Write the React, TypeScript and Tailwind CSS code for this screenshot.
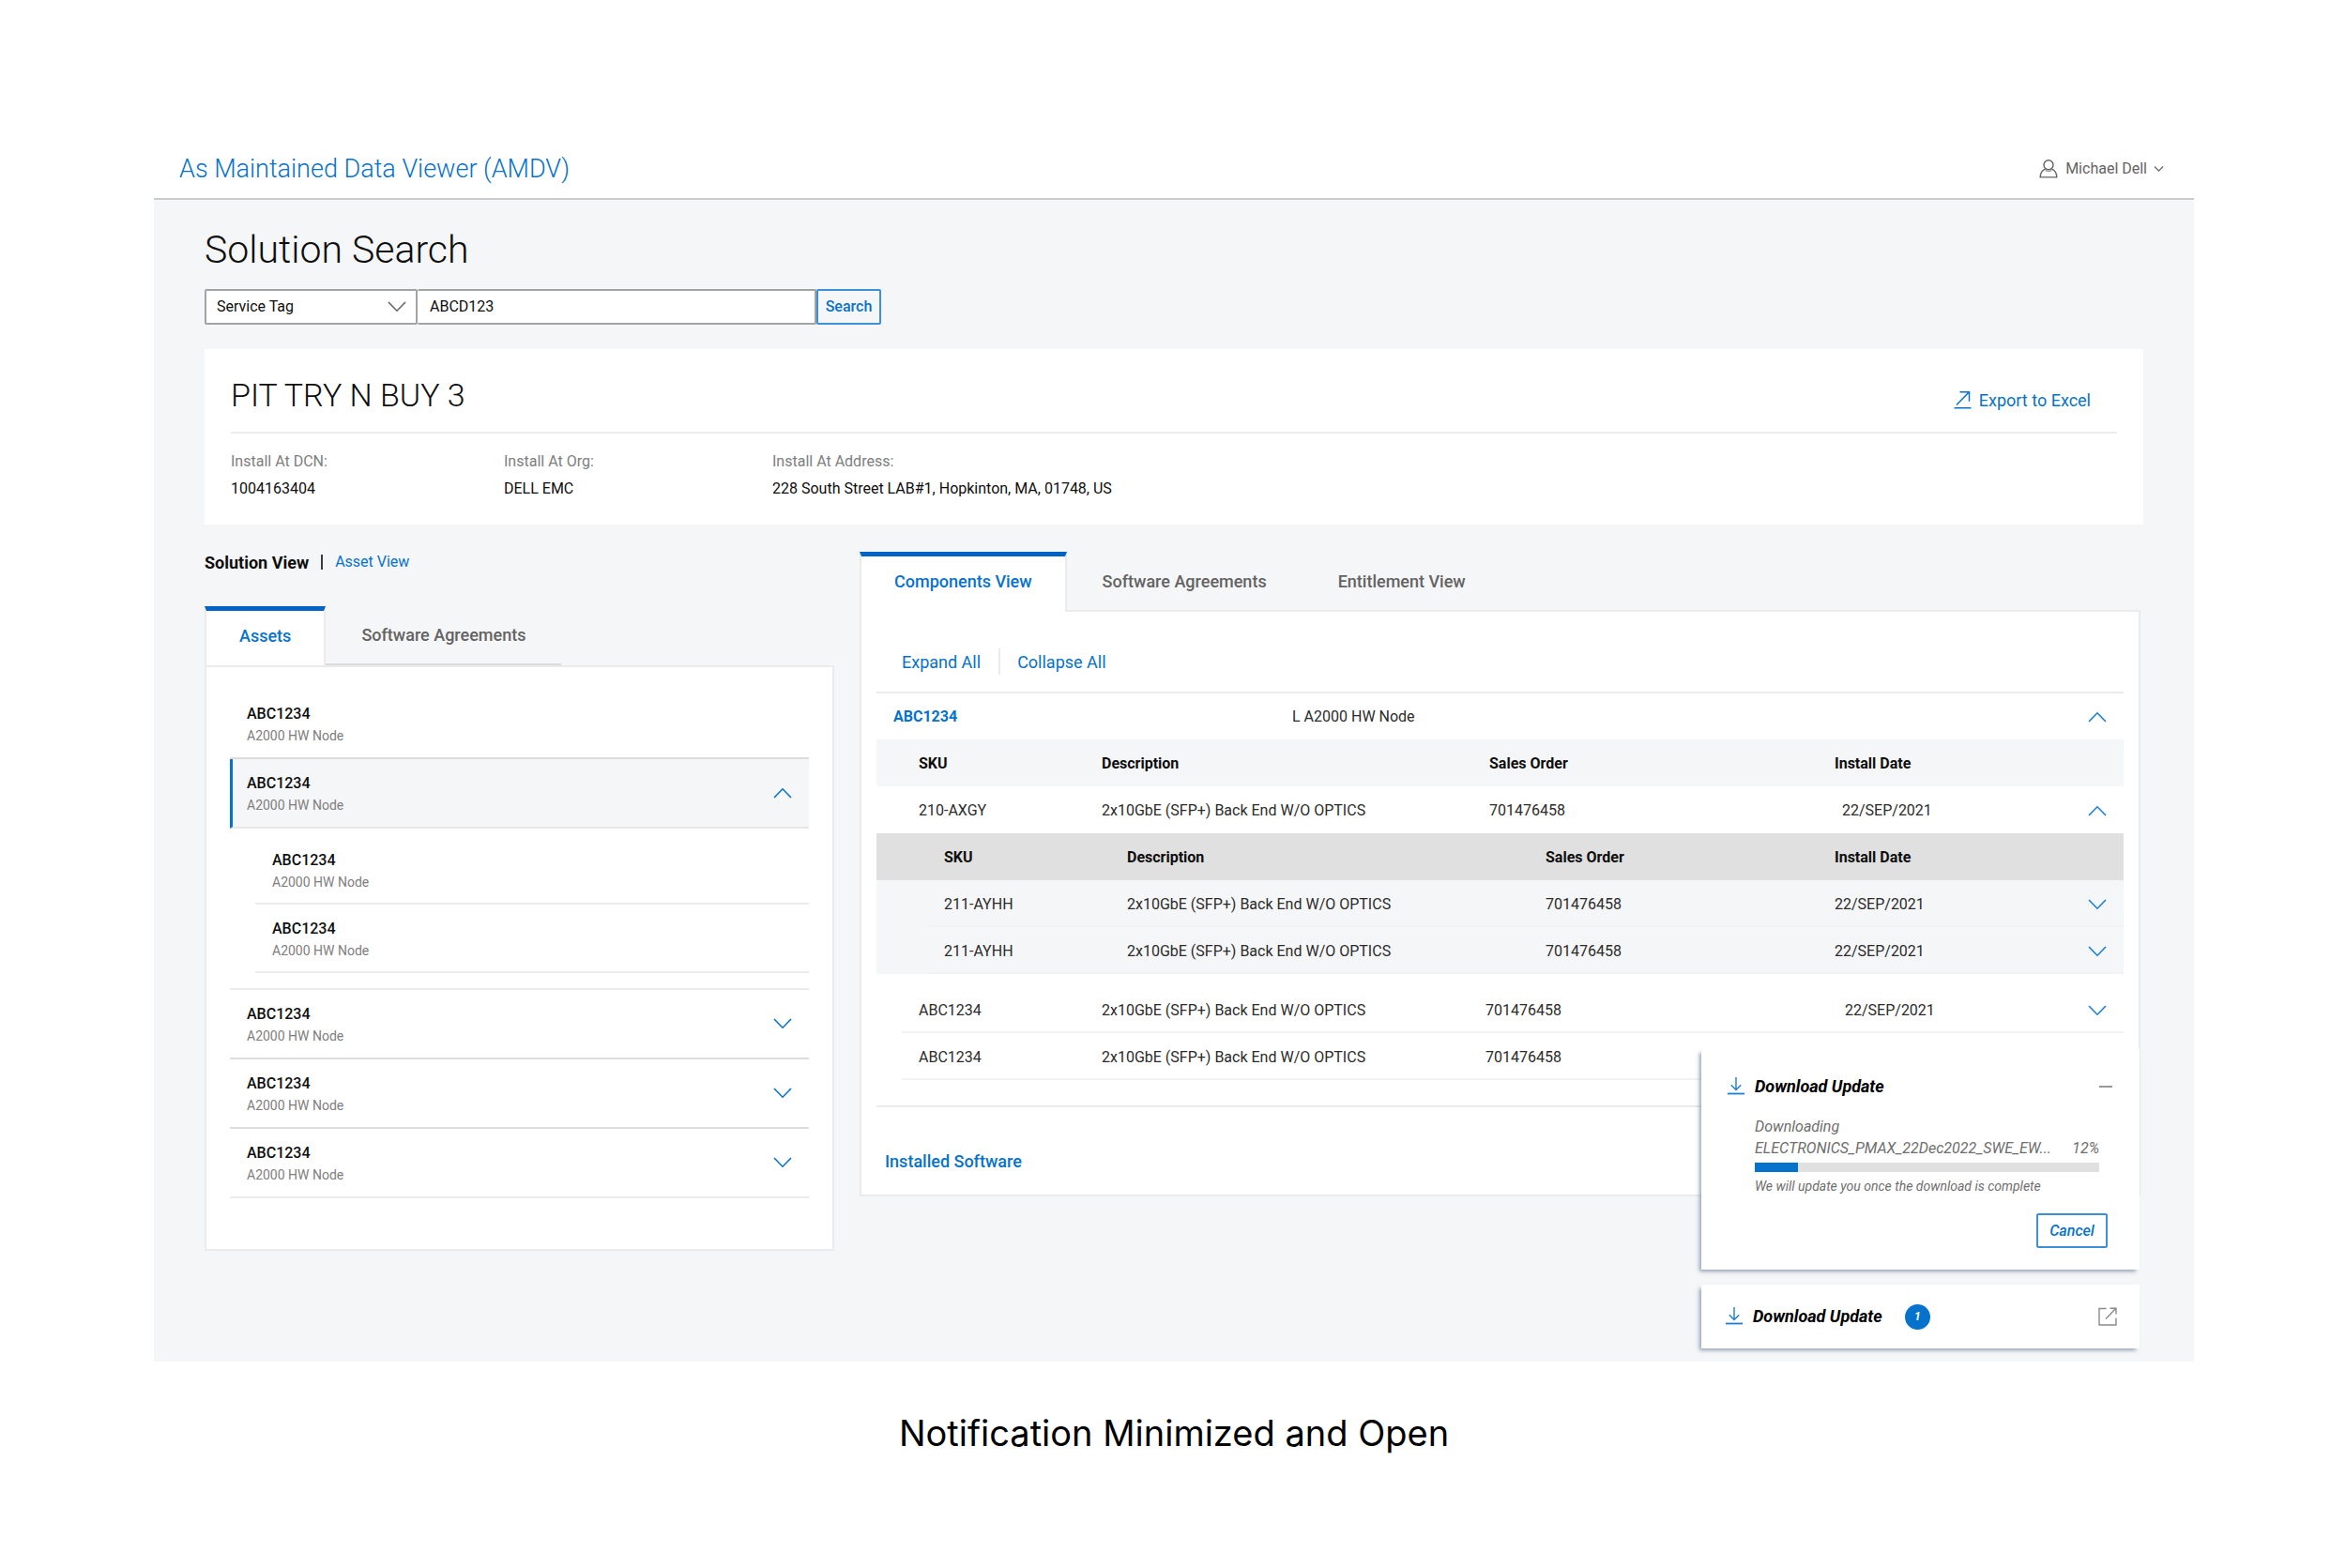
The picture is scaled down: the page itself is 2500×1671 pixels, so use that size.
import type { ReactNode } from "react";

const DESCRIPTION = "2x10GbE (SFP+) Back End W/O OPTICS";
const ORDER = "701476458";
const DATE = "22/SEP/2021";

function Chevron({ up = false, className = "h-3 w-5" }: { up?: boolean; className?: string }) {
  return (
    <svg viewBox="0 0 20 12" fill="none" stroke="currentColor" strokeWidth="1.6" className={className} aria-hidden="true">
      <path d={up ? "M1 11 10 1.8 19 11" : "M1 1l9 9.2L19 1"} />
    </svg>
  );
}

function UserIcon() {
  return (
    <svg viewBox="0 0 20 20" fill="none" stroke="currentColor" strokeWidth="1.4" className="h-5 w-5" aria-hidden="true">
      <circle cx="10" cy="5.8" r="5" />
      <path d="M6.6 9.8C3.4 11.4 1.2 14.4 1.2 18.9h17.6c0-4.5-2.2-7.5-5.4-9.1" />
      <path d="M6.6 11.4c2 1.4 4.8 1.4 6.8 0" opacity=".6" />
    </svg>
  );
}

function ExportIcon() {
  return (
    <svg viewBox="0 0 19 20" fill="none" stroke="currentColor" strokeWidth="1.5" className="h-5 w-[19px]" aria-hidden="true">
      <path d="M3 15.5 16.3 1.8M6.5 1.7h10v10M.5 18.8h18" />
    </svg>
  );
}

function DownloadIcon() {
  return (
    <svg viewBox="0 0 18 20" fill="none" stroke="currentColor" strokeWidth="1.4" className="h-5 w-[18px]" aria-hidden="true">
      <path d="M9 0v13.5M3.8 8.3 9 13.5l5.2-5.2" />
      <path d="M0 17.5h18" strokeWidth="1.8" />
    </svg>
  );
}

function OpenIcon() {
  return (
    <svg viewBox="0 0 20 20" fill="none" stroke="currentColor" strokeWidth="1.4" className="h-5 w-5" aria-hidden="true">
      <path d="M8.5 1.5H1v17.500h18v-7.500M8 12.500 18.700 1.500M12.500 1.200H19V7.500" />
    </svg>
  );
}

function Tab({ active = false, children }: { active?: boolean; children: ReactNode }) {
  return (
    <button
      type="button"
      role="tab"
      aria-selected={active}
      className={
        active
          ? "h-full border-x-2 border-t-[5px] border-x-[#ebebeb] border-t-[#0063c8] bg-white px-[35px] pb-[6px] text-[#0672cb]"
          : "h-full border-t-[5px] border-transparent px-[38px] pb-[6px] text-[#636363]"
      }
    >
      {children}
    </button>
  );
}

function AssetText() {
  return (
    <span className="flex flex-col gap-[2px] pt-[2px] text-left">
      <span className="text-[16px] leading-[22px] font-medium text-[#0e0e0e]">ABC1234</span>
      <span className="text-[14px] leading-5 text-[#7e7e7e]">A2000 HW Node</span>
    </span>
  );
}

function AssetRow({ light = false }: { light?: boolean }) {
  return (
    <button
      type="button"
      className={
        light
          ? "flex h-[74px] w-full items-center justify-between border-b-2 border-[#ebebeb] px-[18px]"
          : "flex h-[74px] w-full items-center justify-between border-b-2 border-[#dcdcdc] px-[18px]"
      }
    >
      <AssetText />
      <span className="text-[#0672cb]">
        <Chevron />
      </span>
    </button>
  );
}

function Toggle({ up = false }: { up?: boolean }) {
  return (
    <button type="button" aria-label={up ? "Collapse row" : "Expand row"} className="block h-6 w-5 text-[#1a7fd6]">
      <Chevron up={up} />
    </button>
  );
}

const cell = "h-[50px] pt-[2px] pl-[18px]";
const line = "h-[50px] border-b-2 border-[#f2f2f3] pt-1 pl-[18px]";
const toggleCell = "h-[50px] pt-[2px] pl-[35px]";
const toggleLine = "h-[50px] border-b-2 border-[#f2f2f3] pt-1 pl-[35px]";

function NestedTable() {
  return (
    <table className="w-full table-fixed border-separate border-spacing-0 bg-[#f5f6f7] text-left">
      <colgroup>
        <col className="w-[54px]" />
        <col className="w-[195px]" />
        <col />
        <col className="w-[308px]" />
        <col className="w-[253px]" />
        <col className="w-[73px]" />
      </colgroup>
      <thead>
        <tr className="bg-[#e0e0e0] text-[#0e0e0e]">
          <td />
          <th className={cell}>SKU</th>
          <th className={cell}>Description</th>
          <th className={cell}>Sales Order</th>
          <th className={cell}>Install Date</th>
          <td />
        </tr>
      </thead>
      <tbody>
        {[0, 1].map((i) => (
          <tr key={i}>
            <td />
            <td className={line}>211-AYHH</td>
            <td className={line}>{DESCRIPTION}</td>
            <td className={line}>{ORDER}</td>
            <td className={line}>{DATE}</td>
            <td className={toggleLine}>
              <Toggle />
            </td>
          </tr>
        ))}
      </tbody>
    </table>
  );
}

function ComponentsTable() {
  return (
    <table className="w-full table-fixed border-separate border-spacing-0 text-left text-[16px] leading-6 text-[#2b2b2b] [&_th]:font-bold">
      <colgroup>
        <col className="w-[27px]" />
        <col className="w-[195px]" />
        <col />
        <col className="w-[372px]" />
        <col className="w-[253px]" />
        <col className="w-[73px]" />
      </colgroup>
      <thead>
        <tr className="bg-[#f5f6f7] text-[#0e0e0e]">
          <td />
          <th className={cell}>SKU</th>
          <th className={cell}>Description</th>
          <th className="h-[50px] pt-[2px] pl-[22px]">Sales Order</th>
          <th className={cell}>Install Date</th>
          <td />
        </tr>
      </thead>
      <tbody>
        <tr>
          <td />
          <td className={cell}>210-AXGY</td>
          <td className={cell}>{DESCRIPTION}</td>
          <td className="h-[50px] pt-[2px] pl-[22px]">{ORDER}</td>
          <td className="h-[50px] pt-[2px] pl-[26px]">{DATE}</td>
          <td className={toggleCell}>
            <Toggle up />
          </td>
        </tr>
        <tr>
          <td colSpan={6} className="p-0 pb-[13px]">
            <NestedTable />
          </td>
        </tr>
        {[0, 1].map((i) => (
          <tr key={i}>
            <td />
            <td className={line}>ABC1234</td>
            <td className={line}>{DESCRIPTION}</td>
            <td className={line}>{ORDER}</td>
            <td className="h-[50px] border-b-2 border-[#f2f2f3] pt-1 pl-[29px]">{DATE}</td>
            <td className={toggleLine}>
              <Toggle />
            </td>
          </tr>
        ))}
      </tbody>
    </table>
  );
}

function Fact({ label, value }: { label: string; value: string }) {
  return (
    <div className="flex flex-col gap-[5px] text-[16px] leading-6">
      <dt className="text-[#7e7e7e]">{label}</dt>
      <dd className="text-[#0e0e0e]">{value}</dd>
    </div>
  );
}

function Notifications() {
  return (
    <aside className="absolute right-[58px] bottom-[14px] flex w-[467px] flex-col gap-4 italic">
      <section className="bg-white pt-[26px] pb-[23px] pl-7 shadow-[-3px_3px_4px_-1px_rgba(80,105,140,0.6)]">
        <div className="flex h-7 items-center pr-[29px]">
          <span className="text-[#1a7fd6]">
            <DownloadIcon />
          </span>
          <h3 className="ml-[11px] flex-1 text-[18px] leading-7 font-bold text-black">Download Update</h3>
          <button type="button" aria-label="Minimize" className="flex h-6 w-[14px] items-center">
            <span className="h-[2px] w-full bg-[#9a9a9a]" />
          </button>
        </div>
        <div className="mt-[17px] pr-[43px] pl-[29px] text-[#6e6e6e]">
          <p className="text-[16px] leading-[23px]">Downloading</p>
          <p className="flex justify-between text-[16px] leading-[23px]">
            <span>ELECTRONICS_PMAX_22Dec2022_SWE_EW...</span>
            <span>12%</span>
          </p>
          <div
            role="progressbar"
            aria-label="Download progress"
            aria-valuenow={12}
            aria-valuemin={0}
            aria-valuemax={100}
            className="mt-1 h-[10px] bg-[#e0e0e0]"
          >
            <div className="h-full w-1/8 bg-[#0672cb]" />
          </div>
          <p className="mt-[5px] text-[14px] leading-5">We will update you once the download is complete</p>
        </div>
        <div className="mt-[19px] flex justify-end pr-[34px]">
          <button
            type="button"
            className="h-[37px] w-[76px] rounded-[2px] border-2 border-[#3d8fd6] text-[16px] font-medium text-[#0672cb] italic"
          >
            Cancel
          </button>
        </div>
      </section>
      <section className="flex h-[68px] items-center bg-white pr-6 pl-[26px] shadow-[-3px_3px_4px_-1px_rgba(80,105,140,0.6)]">
        <span className="text-[#1a7fd6]">
          <DownloadIcon />
        </span>
        <h3 className="ml-[11px] text-[18px] leading-7 font-bold text-black">Download Update</h3>
        <span className="ml-6 flex size-[27px] items-center justify-center rounded-full bg-[#0672cb] text-[12px] font-bold text-white">
          1
        </span>
        <button type="button" aria-label="Open notification" className="ml-auto text-[#8a8a8a]">
          <OpenIcon />
        </button>
      </section>
    </aside>
  );
}

export default function App() {
  return (
    <div className="min-h-screen bg-white pt-[148px] pr-[162px] pl-[164px] font-['Roboto',sans-serif]">
      <header className="flex h-[65px] items-center justify-between border-b-2 border-[#cbcccd] pr-8 pl-[27px]">
        <a href="#home" className="text-[27px] leading-10 font-light text-[#0672cb]">
          As Maintained Data Viewer (AMDV)
        </a>
        <button type="button" className="flex items-center text-[16px] text-[#636363]">
          <UserIcon />
          <span className="mr-[7px] ml-2">Michael Dell</span>
          <Chevron className="h-[6px] w-[11px] [stroke-width:2.5]" />
        </button>
      </header>

      <main className="relative bg-[#f5f6f7] px-[54px] pt-[29px] pb-[118px]">
        <h1 className="text-[41px] leading-[48px] font-light text-[#0e0e0e]">Solution Search</h1>

        <form className="mt-[18px] flex h-[38px] text-[16px] text-[#0e0e0e]" onSubmit={(e) => e.preventDefault()}>
          <div className="relative w-[227px]">
            <select
              aria-label="Search by"
              className="h-full w-full appearance-none rounded-[2px] border-2 border-[#a3a3a3] bg-white pl-[11px]"
            >
              <option>Service Tag</option>
            </select>
            <span className="pointer-events-none absolute inset-y-0 right-3 flex items-center text-[#636363]">
              <Chevron />
            </span>
          </div>
          <input
            aria-label="Search value"
            defaultValue="ABCD123"
            className="w-[425px] rounded-[2px] border-2 border-l-0 border-[#a3a3a3] bg-white pl-[13px]"
          />
          <button type="submit" className="w-[69px] rounded-[2px] border-2 border-[#3d8fd6] font-medium text-[#0672cb]">
            Search
          </button>
        </form>

        <section className="mt-[26px] bg-white px-7 pt-[25px] pb-[26px]">
          <div className="flex items-end justify-between border-b-2 border-[#ebebeb] pr-7 pb-[15px]">
            <h2 className="text-[34px] leading-[48px] font-light text-[#0e0e0e]">PIT TRY N BUY 3</h2>
            <button type="button" className="flex h-[38px] items-center gap-2 text-[18px] text-[#0672cb]">
              <ExportIcon />
              Export to Excel
            </button>
          </div>
          <dl className="mt-[18px] grid grid-cols-[291px_286px_1fr]">
            <Fact label="Install At DCN:" value="1004163404" />
            <Fact label="Install At Org:" value="DELL EMC" />
            <Fact label="Install At Address:" value="228 South Street LAB#1, Hopkinton, MA, 01748, US" />
          </dl>
        </section>

        <div className="flex items-start gap-[27px] pr-[3px]">
          <section className="mt-[26px] w-[671px] shrink-0">
            <div className="flex h-7 items-center text-[18px]">
              <span className="font-bold text-[#0e0e0e]">Solution View</span>
              <span className="mx-[13px] h-4 w-[2px] bg-[#3c3c3c]" />
              <a href="#asset-view" className="text-[16px] text-[#0672cb]">
                Asset View
              </a>
            </div>
            <div role="tablist" className="mt-[33px] flex h-[63px] text-[18px] font-medium">
              <Tab active>Assets</Tab>
              <div className="border-b-2 border-[#dcdcdc]">
                <Tab>Software Agreements</Tab>
              </div>
            </div>
            <div className="border-2 border-[#ebebeb] bg-white px-[25px] pt-6 pb-[54px]">
              <div className="flex h-[74px] items-center border-b-2 border-[#dcdcdc] px-[18px]">
                <AssetText />
              </div>
              <button
                type="button"
                aria-expanded="true"
                className="flex h-[74px] w-full items-center justify-between border-b-2 border-l-[3px] border-b-[#e6e6e6] border-l-[#0672cb] bg-[#f5f6f7] pr-[18px] pl-[15px]"
              >
                <AssetText />
                <span className="text-[#0672cb]">
                  <Chevron up />
                </span>
              </button>
              <div className="border-b-2 border-[#ebebeb] pt-2 pb-4 pl-[27px]">
                <div className="flex h-[73px] items-center border-b-2 border-[#ebebeb] pl-[18px]">
                  <AssetText />
                </div>
                <div className="flex h-[73px] items-center border-b-2 border-[#ebebeb] pl-[18px]">
                  <AssetText />
                </div>
              </div>
              <AssetRow />
              <AssetRow />
              <AssetRow light />
            </div>
          </section>

          <section className="mt-[29px] min-w-0 flex-1">
            <div role="tablist" className="relative -mb-[2px] flex h-[64px] text-[18px] font-medium">
              <Tab active>Components View</Tab>
              <Tab>Software Agreements</Tab>
              <Tab>Entitlement View</Tab>
            </div>
            <div className="border-2 border-[#ebebeb] bg-white px-4 pt-[39px] pb-[21px]">
              <div className="flex h-7 items-stretch pl-[27px] text-[18px] text-[#0672cb]">
                <button type="button" className="border-r-2 border-[#ebebeb] pr-[19px]">
                  Expand All
                </button>
                <button type="button" className="pl-[18px]">
                  Collapse All
                </button>
              </div>
              <div className="mt-[18px] flex h-[51px] items-center border-t-2 border-[#ebebeb] pr-[18px] pl-[18px] text-[16px]">
                <a href="#node" className="w-[425px] font-bold text-[#0672cb]">
                  ABC1234
                </a>
                <span className="flex-1 text-[#2b2b2b]">L A2000 HW Node</span>
                <button type="button" aria-label="Collapse group" className="text-[#1a7fd6]">
                  <Chevron up />
                </button>
              </div>
              <ComponentsTable />
              <div className="mt-[27px] border-t-2 border-[#ebebeb] pt-[44px] pl-[9px]">
                <a href="#installed-software" className="block text-[18px] leading-7 font-medium text-[#0672cb]">
                  Installed Software
                </a>
              </div>
            </div>
          </section>
        </div>

        <Notifications />
      </main>

      <p className="mt-12 text-center font-['Inter',sans-serif] text-[38px] leading-[56px] text-black">
        Notification Minimized and Open
      </p>
    </div>
  );
}
